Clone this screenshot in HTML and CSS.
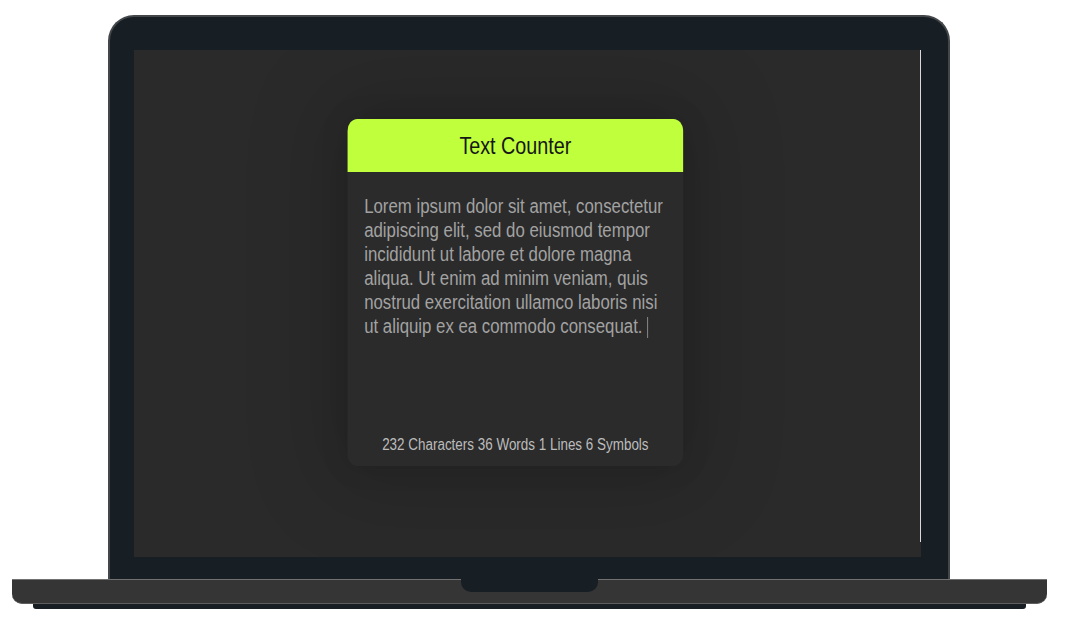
FILE: index.html
```html
<!DOCTYPE html>
<html lang="en">
<head>
<meta charset="utf-8">
<title>Text Counter</title>
<link rel="stylesheet" href="styles.css">
</head>
<body>
<div class="laptop">
  <div class="lid">
    <div class="screen">
      <div class="viewport">
        <div class="page">
          <div class="card">
            <div class="card-head">Text Counter</div>
            <div class="card-body">
              <div class="editor">Lorem ipsum dolor sit amet, consectetur adipiscing elit, sed do eiusmod tempor incididunt ut labore et dolore magna aliqua. Ut enim ad minim veniam, quis nostrud exercitation ullamco laboris nisi ut aliquip ex ea commodo consequat. <span class="caret"></span></div>
              <div class="stats">232 Characters 36 Words 1 Lines 6 Symbols</div>
            </div>
          </div>
        </div>
      </div>
      <div class="scroll-edge"></div>
    </div>
  </div>
  <div class="base"><div class="notch"></div></div>
  <div class="foot"></div>
</div>
</body>
</html>
```

FILE: styles.css
```css
* { box-sizing: border-box; }
html, body { margin: 0; padding: 0; background: #ffffff; }
body { font-family: "Liberation Sans", Arial, sans-serif; }

.laptop { width: 1065px; padding-top: 15px; }

.lid {
  margin-left: 108px;
  width: 842px;
  height: 564px;
  background: #171e24;
  border: 2px solid #444749;
  border-bottom: none;
  border-radius: 26px 26px 0 0;
  padding: 33px 27px 0 24px;
}

.screen {
  width: 787px;
  height: 507px;
  background: #2a2a2a;
  display: flex;
  align-items: flex-start;
}

.viewport {
  width: 786px;
  height: 507px;
  overflow: hidden;
}

.page {
  width: 936px;
  height: 507px;
  transform: scaleX(0.84);
  transform-origin: 0 0;
  padding: 69px 0 0 254px;
}

.scroll-edge {
  width: 1px;
  height: 492px;
  background: #d9d9d9;
}

.card {
  width: 400px;
  height: 347px;
  border-radius: 12px;
  background: #2b2b2b;
  box-shadow: 0 0 90px 30px rgba(0, 0, 0, 0.13), 0 0 30px rgba(0, 0, 0, 0.12);
  display: flex;
  flex-direction: column;
  overflow: hidden;
}

.card-head {
  height: 53px;
  background: #bfff3c;
  color: #161616;
  font-size: 23.5px;
  display: flex;
  align-items: center;
  justify-content: center;
  padding-top: 1px;
}

.card-body {
  flex: 1;
  display: flex;
  flex-direction: column;
}

.editor {
  flex: 1;
  padding: 22px 20px 0 20px;
  font-size: 20px;
  line-height: 24px;
  color: #a2a2a2;
}

.caret {
  display: inline-block;
  width: 1px;
  height: 21px;
  background: #9a9a9a;
  vertical-align: -5px;
}

.stats {
  text-align: center;
  font-size: 16px;
  color: #bcbcbc;
  padding-bottom: 12px;
}

.base {
  margin-left: 12px;
  width: 1035px;
  height: 25px;
  background: #353535;
  border-top: 1px solid #717171;
  border-bottom: 1px solid #5e5e5e;
  border-radius: 0 0 10px 10px;
  display: flex;
  justify-content: center;
}

.notch {
  width: 137px;
  height: 13px;
  margin-top: -1px;
  background: #171e24;
  border-radius: 0 0 10px 10px;
}

.foot {
  margin-left: 33px;
  width: 993px;
  height: 5px;
  background: #171e24;
  border-radius: 0 0 3px 3px;
}
```
